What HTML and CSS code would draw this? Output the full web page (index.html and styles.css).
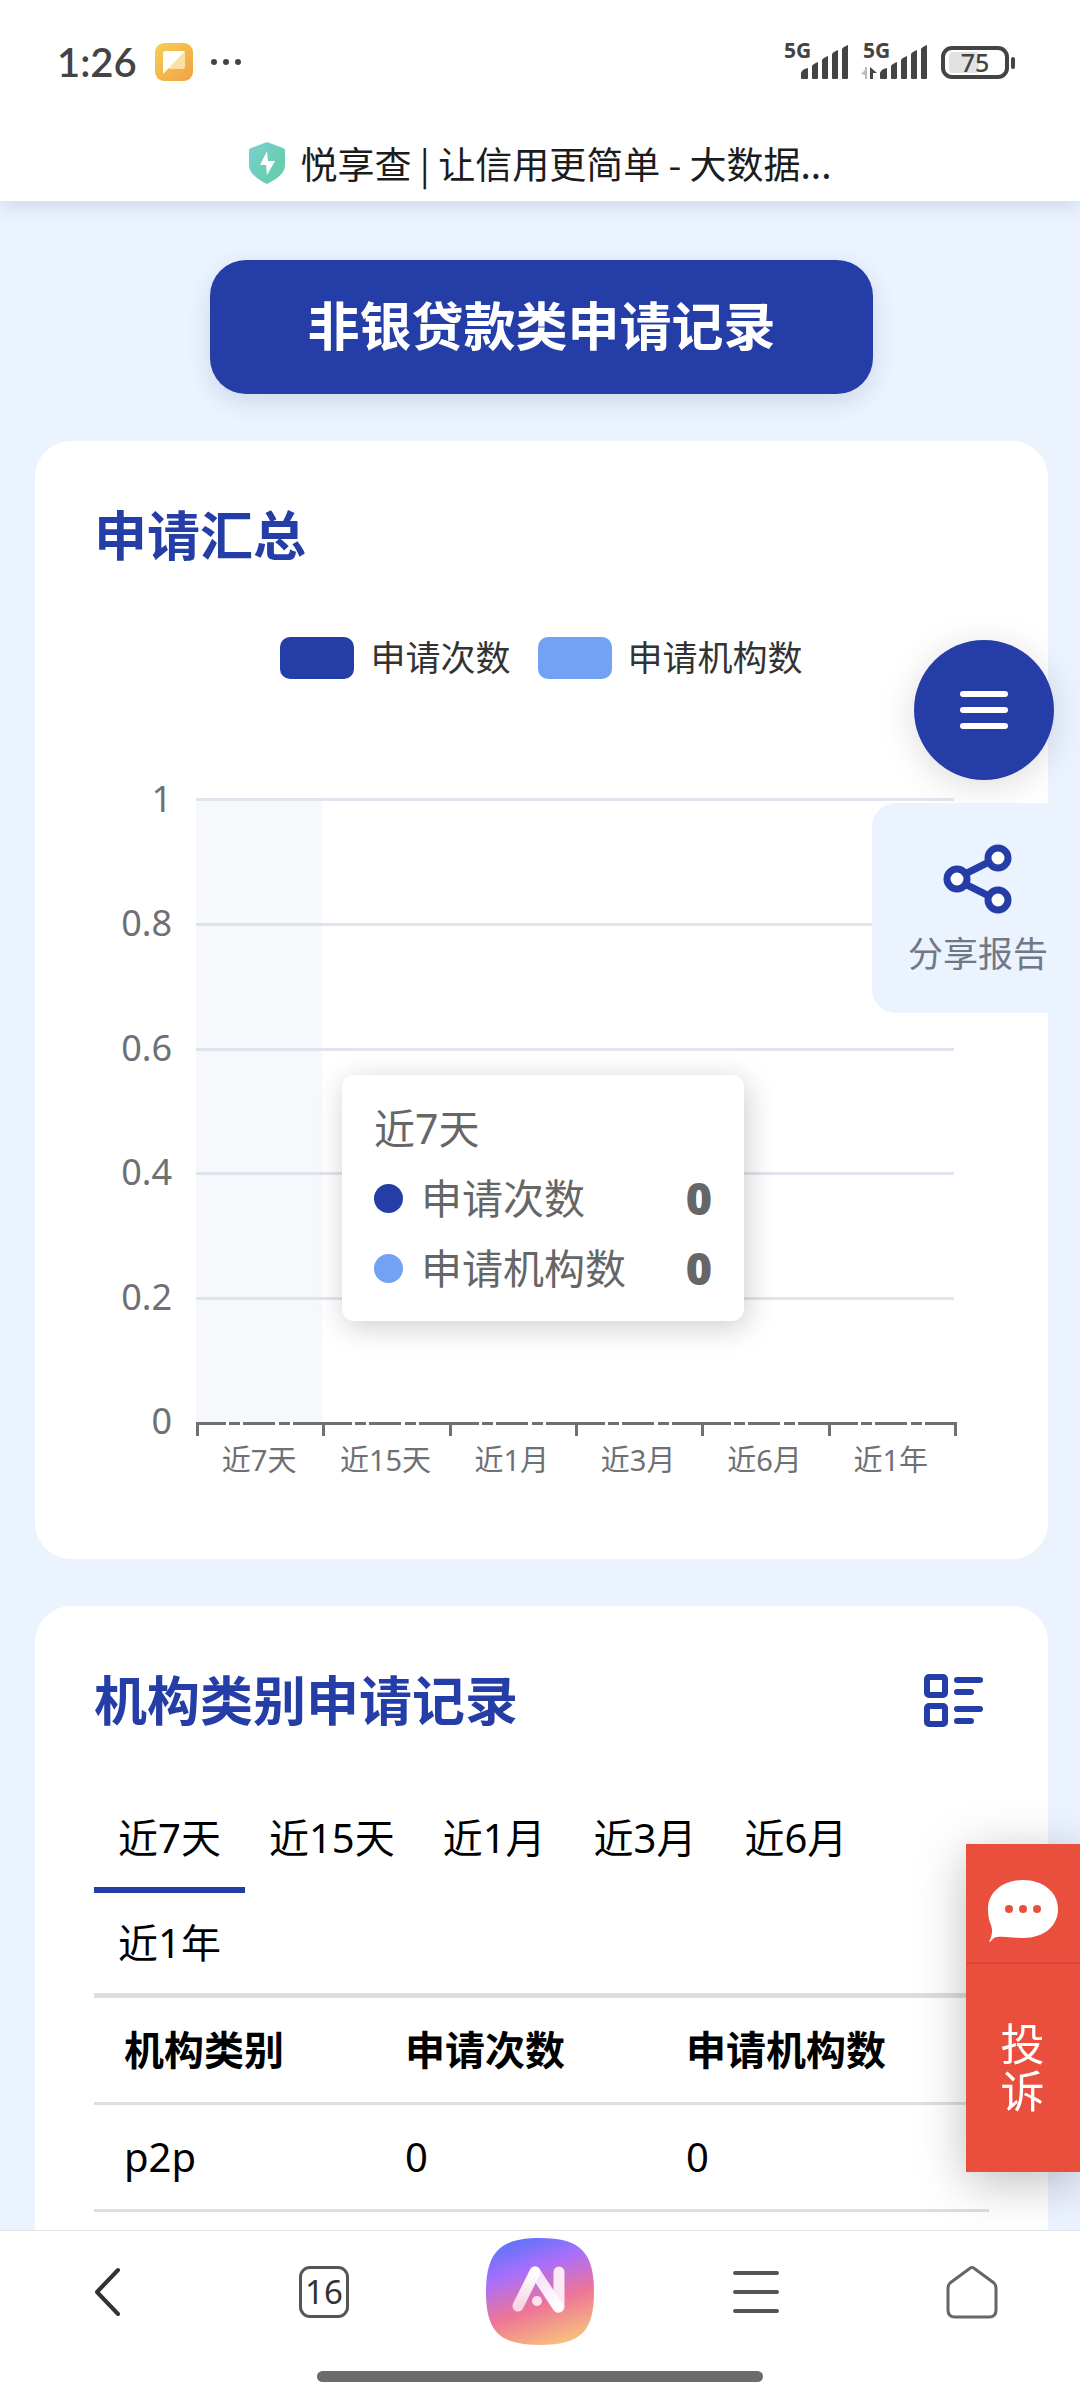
FILE: index.html
```html
<!DOCTYPE html>
<html lang="zh-CN">
<head>
<meta charset="utf-8">
<meta name="viewport" content="width=device-width, initial-scale=1">
<title>悦享查 | 让信用更简单 - 大数据</title>
<link rel="stylesheet" href="styles.css">
</head>
<body>
<header class="topbar">
  <div class="status">
    <span class="clock">1:26</span>
    <svg class="note-icon" width="38" height="38" viewBox="0 0 38 38" aria-hidden="true">
      <defs><linearGradient id="note" x1="0" y1="0" x2="1" y2="1"><stop offset="0" stop-color="#f5cf55"/><stop offset="1" stop-color="#f3a143"/></linearGradient></defs>
      <rect width="38" height="38" rx="9" fill="url(#note)"/>
      <path d="M10 8h18a2 2 0 0 1 2 2v14a2 2 0 0 1-2 2H14z" fill="#fae0a6"/>
      <path d="M10 8h20L8 31V10a2 2 0 0 1 2-2z" fill="#fff"/>
    </svg>
    <svg class="dots-icon" width="30" height="8" viewBox="0 0 30 8" fill="#444" aria-hidden="true"><circle cx="3" cy="4" r="3"/><circle cx="15" cy="4" r="3"/><circle cx="27" cy="4" r="3"/></svg>
    <svg class="signals" width="232" height="64" viewBox="0 -12 232 64" fill="#444" aria-hidden="true">
      <text x="0" y="16" class="net">5G</text>
      <path id="bars" d="M17 36v-5q1-4 7-5v10q0 1-1 1h-5q-1 0-1-1zM28 36v-12q1-2 6-4v16q0 1-1 1h-4q-1 0-1-1zM38 36v-18q1-2 6-4v22q0 1-1 1h-4q-1 0-1-1zM48 36v-24q1-2 6-4v28q0 1-1 1h-4q-1 0-1-1zM58 36v-29q1-2 6-4v33q0 1-1 1h-4q-1 0-1-1z"/>
      <text x="79" y="16" class="net">5G</text>
      <use href="#bars" x="79"/>
      <path d="M83 25v12h-2v-4l-4-1 4-4v-3z" fill="#bbb"/>
      <path d="M86 37V25l7 6h-4v6z"/>
      <rect x="159" y="6" width="64" height="29" rx="9" fill="none" stroke="#444" stroke-width="4"/>
      <rect x="165" y="10" width="30" height="21" rx="4" fill="#e2e2e2"/>
      <rect x="227" y="15" width="4" height="12" rx="2"/>
      <text x="191" y="30" class="level">75</text>
    </svg>
  </div>
  <div class="site">
    <svg width="36" height="42" viewBox="0 0 36 42" aria-hidden="true">
      <defs><linearGradient id="shield" x1="0" y1="0" x2="1" y2="1"><stop offset="0" stop-color="#7ad0d0"/><stop offset="1" stop-color="#62cba4"/></linearGradient></defs>
      <path d="M18 0 34 6q2 1 2 2v15c0 8-8 14-18 19C8 37 0 31 0 23V8q0-1 2-2z" fill="url(#shield)"/>
      <path d="M18 9 11 23h6l1 10 8-14h-7z" fill="#fff"/>
    </svg>
    <span class="site-name">悦享查 | 让信用更简单 - 大数据...</span>
  </div>
</header>

<main class="report">
  <h1 class="banner">非银贷款类申请记录</h1>

  <section class="card">
    <h2 class="card-title">申请汇总</h2>
    <ul class="legend">
      <li><i class="swatch swatch-count"></i>申请次数</li>
      <li><i class="swatch swatch-org"></i>申请机构数</li>
    </ul>
    <div class="chart">
      <ul class="y-axis"><li>1</li><li>0.8</li><li>0.6</li><li>0.4</li><li>0.2</li><li>0</li></ul>
      <div class="plot">
        <div class="lines"><i></i><i></i><i></i><i></i><i></i></div>
        <div class="band"></div>
        <div class="tooltip">
          <p>近7天</p>
          <p><i class="dot swatch-count"></i>申请次数<b>0</b></p>
          <p><i class="dot swatch-org"></i>申请机构数<b>0</b></p>
        </div>
      </div>
      <ul class="x-axis"><li>近7天</li><li>近15天</li><li>近1月</li><li>近3月</li><li>近6月</li><li>近1年</li></ul>
    </div>
  </section>

  <section class="card card-last">
    <div class="card-head">
      <h2 class="card-title">机构类别申请记录</h2>
      <button class="view-toggle" type="button" aria-label="切换视图">
        <svg width="60" height="54" viewBox="0 0 60 54" fill="none" stroke="#253da6" stroke-width="6" stroke-linecap="round" stroke-linejoin="round">
          <rect x="3" y="3" width="18" height="18" rx="2"/><rect x="3" y="32" width="18" height="18" rx="2"/>
          <path d="M33 6h23M33 18h14M33 35h23M33 47h14"/>
        </svg>
      </button>
    </div>
    <div class="tabs" role="tablist">
      <button class="tab active" type="button" role="tab">近7天</button>
      <button class="tab" type="button" role="tab">近15天</button>
      <button class="tab" type="button" role="tab">近1月</button>
      <button class="tab" type="button" role="tab">近3月</button>
      <button class="tab" type="button" role="tab">近6月</button>
      <button class="tab" type="button" role="tab">近1年</button>
    </div>
    <table class="records">
      <thead><tr><th class="narrow">机构类别</th><th class="narrow">申请次数</th><th>申请机构数</th></tr></thead>
      <tbody><tr><td>p2p</td><td>0</td><td>0</td></tr></tbody>
    </table>
  </section>
</main>

<button class="menu-fab" type="button" aria-label="菜单">
  <svg width="50" height="40" viewBox="0 0 50 40" stroke="#fff" stroke-width="6" stroke-linecap="round"><path d="M4 4h42M4 20h42M4 36h42"/></svg>
</button>
<button class="share" type="button">
  <svg width="70" height="70" viewBox="0 0 70 70" fill="none" stroke="#253da6" stroke-width="7">
    <path d="M24 29 46 18M24 41 46 52"/>
    <circle cx="14" cy="35" r="10" fill="#fff"/><circle cx="55" cy="14" r="10" fill="#fff"/><circle cx="55" cy="56" r="10" fill="#fff"/>
  </svg>
  分享报告
</button>
<a class="complaint" href="#complaint">
  <span class="complaint-icon">
    <svg width="72" height="64" viewBox="0 0 72 64" aria-hidden="true">
      <path d="M36 1c20 0 35 12 35 29S57 59 36 59c-10 0-18-2-26-1-3 0-5 3-7 5-1 0-1-1 0-2 2-5 3-10 1-15C2 42 1 36 1 30 1 13 16 1 36 1z" fill="#fff"/>
      <g fill="#ea4f3d"><circle cx="22" cy="30" r="4"/><circle cx="36" cy="30" r="4"/><circle cx="50" cy="30" r="4"/></g>
    </svg>
  </span>
  <span class="complaint-text">投诉</span>
</a>

<nav class="browser-nav">
  <div class="nav-row">
    <button type="button" aria-label="返回"><svg width="26" height="50" viewBox="0 0 26 50" fill="none" stroke="#333" stroke-width="4" stroke-linecap="round" stroke-linejoin="round"><path d="M23 3 2 25l21 22"/></svg></button>
    <button type="button"><span class="tab-count">16</span></button>
    <button type="button" aria-label="AI">
      <svg width="110" height="108" viewBox="0 0 110 108">
        <defs>
          <linearGradient id="ai" x1=".25" y1="0" x2=".6" y2="1"><stop offset="0" stop-color="#5b73fa"/><stop offset=".3" stop-color="#a86ffb"/><stop offset=".65" stop-color="#ee7596"/><stop offset="1" stop-color="#f6bd7e"/></linearGradient>
          <linearGradient id="leg" x1="0" y1="0" x2="0" y2="1"><stop offset="0" stop-color="#fff"/><stop offset="1" stop-color="#f9d5e4"/></linearGradient>
          <linearGradient id="mid" x1="0" y1="0" x2="1" y2="1"><stop offset="0" stop-color="#f3dcf9"/><stop offset="1" stop-color="#fff"/></linearGradient>
        </defs>
        <path d="M55 0C95 0 109 14 109 54S95 107 55 107 1 94 1 54 15 0 55 0z" fill="url(#ai)"/>
        <g fill="none" stroke-linecap="round" stroke-linejoin="round" stroke-width="11">
          <path d="M74 34v35" stroke="#fbe9f3"/>
          <path d="M50 34 73 69" stroke="url(#mid)"/>
          <path d="M33 68 50 34" stroke="url(#leg)"/>
        </g>
        <circle cx="52" cy="63" r="5" fill="#fce3ee"/>
      </svg>
    </button>
    <button type="button" aria-label="菜单"><svg width="48" height="44" viewBox="0 0 48 44" stroke="#555" stroke-width="4" stroke-linecap="round"><path d="M3 3h42M3 22h42M3 41h42"/></svg></button>
    <button type="button" aria-label="主页"><svg width="52" height="54" viewBox="0 0 52 54" fill="none" stroke="#666" stroke-width="3" stroke-linejoin="round"><path d="M23 4q3-3 6 0l19 14q2 2 2 5v22q0 7-7 7H9q-7 0-7-7V23q0-3 2-5z"/></svg></button>
  </div>
  <div class="home-bar"></div>
</nav>
</body>
</html>
```
FILE: styles.css
```css
* { box-sizing: border-box; }
body, h1, h2, ul, p { margin: 0; padding: 0; }
ul { list-style: none; }
i { display: block; }
svg { display: block; flex: none; }

body {
  display: flex;
  flex-direction: column;
  min-height: 100vh;
  background: #ebf3ff;
  color: #000;
  font-family: "Noto Sans", "Noto Sans CJK SC", sans-serif;
}
button {
  padding: 0;
  border: 0;
  background: none;
  color: inherit;
  font-family: inherit;
}

/* Status bar and page title */
.topbar {
  position: relative;
  height: 201px;
  background: #fff;
  box-shadow: 0 4px 20px rgba(40, 60, 90, .16);
}
.status {
  display: flex;
  align-items: center;
  height: 124px;
  padding: 0 64px 0 57px;
}
.clock {
  color: #444;
  font-family: Lato, sans-serif;
  font-size: 40px;
  font-weight: 600;
}
.note-icon { margin-left: 18px; }
.dots-icon { margin-left: 18px; }
.signals { margin-left: auto; }
.net { font: 700 21px "Open Sans", sans-serif; }
.level { font: 500 25px "Noto Sans", sans-serif; text-anchor: middle; }
.site {
  display: flex;
  align-items: center;
  justify-content: center;
  gap: 16px;
  height: 77px;
}
.site-name {
  color: #1c1c1c;
  font-family: "Noto Sans CJK SC", sans-serif;
  font-size: 37px;
  line-height: 48px;
}

/* Report */
.report {
  display: flex;
  flex: 1;
  flex-direction: column;
  padding: 59px 32px 0 35px;
}
.banner {
  align-self: center;
  margin-bottom: 47px;
  padding: 30px 97px 32px;
  border-radius: 36px;
  background: #253da6;
  box-shadow: 0 8px 24px rgba(40, 60, 90, .14);
  color: #fff;
  font-size: 52px;
  font-weight: 700;
  line-height: 72px;
}
.card {
  margin-bottom: 47px;
  padding: 59px 59px 84px;
  border-radius: 36px;
  background: #fff;
}
.card-last {
  flex: 1;
  margin-bottom: 0;
  padding-bottom: 16px;
  border-radius: 36px 36px 0 0;
}
.card-head {
  display: flex;
  align-items: center;
  justify-content: space-between;
}
.card-title {
  color: #253da6;
  font-size: 53px;
  font-weight: 700;
  line-height: 72px;
}
.view-toggle { margin-right: 5px; }

/* Chart */
.legend {
  display: flex;
  justify-content: center;
  gap: 27px;
  margin: 65px 0 119px;
  color: #333;
  font-size: 35px;
  line-height: 42px;
}
.legend li {
  display: flex;
  gap: 16px;
}
.swatch {
  width: 74px;
  height: 42px;
  border-radius: 10px;
}
.swatch-count { background: #253da6; }
.swatch-org { background: #73a2f4; }
.chart {
  display: grid;
  grid-template-columns: 78px 1fr;
  padding: 0 35px 0 24px;
}
.y-axis {
  display: flex;
  flex-direction: column;
  justify-content: space-between;
  margin: -19px 0;
  color: #6e7074;
  font-size: 36px;
  line-height: 40px;
}
.y-axis li {
  width: 54px;
  text-align: right;
}
.plot {
  display: grid;
  grid-template-columns: repeat(6, 1fr);
  position: relative;
  height: 624px;
}
.lines {
  display: flex;
  flex-direction: column;
  grid-area: 1 / 1 / 2 / 7;
}
.lines i {
  flex: 1;
  border-top: 3px solid #e2e5ef;
}
.band {
  grid-area: 1 / 1;
  background: rgba(210, 219, 238, .2);
}
.x-axis {
  display: grid;
  grid-column: 2;
  grid-template-columns: repeat(6, 1fr);
  margin-right: -3px;
  border-right: 3px solid transparent;
  background: linear-gradient(#6e7074, #6e7074) 100% 0 / 3px 14px no-repeat border-box;
  color: #6e7074;
  font-size: 29px;
  line-height: 30px;
  text-align: center;
}
.x-axis li {
  padding-top: 23px;
  background:
    linear-gradient(#6e7074, #6e7074) 0 0 / 3px 14px no-repeat,
    linear-gradient(90deg, #6e7074 30px, #fff 30px 33px, #6e7074 33px 44px, #fff 44px 47px, #6e7074 47px 79px, #fff 79px 83px, #6e7074 83px 94px, #fff 94px 97px, #6e7074 97px) 0 0 / 100% 3px no-repeat;
}
.tooltip {
  position: absolute;
  top: 277px;
  left: 146px;
  width: 402px;
  padding: 18px 32px;
  border-radius: 12px;
  background: #fff;
  box-shadow: 3px 6px 30px rgba(0, 0, 0, .2);
  color: #666;
  font-size: 41px;
  line-height: 70px;
}
.tooltip p {
  display: flex;
  align-items: center;
}
.tooltip b {
  margin-left: auto;
  font-size: 45px;
  font-weight: 900;
}
.dot {
  width: 29px;
  height: 29px;
  margin-right: 18px;
  border-radius: 50%;
}

/* Records */
.tabs {
  display: flex;
  flex-wrap: wrap;
  margin-top: 51px;
  padding-right: 70px;
}
.tab {
  padding: 0 24px;
  border-bottom: 6px solid transparent;
  font-size: 40px;
  line-height: 99px;
}
.tab.active { border-color: #253da6; }
.records {
  width: 100%;
  margin-top: -5px;
  border-top: 5px solid #dcdfe0;
  border-spacing: 0;
  font-size: 40px;
  line-height: 56px;
  text-align: left;
}
.records th, .records td {
  height: 107px;
  padding: 0 30px;
  border-bottom: 3px solid #dcdfe0;
}
.records .narrow { width: 31.4%; }

/* Floating controls */
.menu-fab {
  position: fixed;
  top: 640px;
  right: 26px;
  display: grid;
  place-items: center;
  width: 140px;
  height: 140px;
  border-radius: 50%;
  background: #253da6;
  box-shadow: 0 6px 36px rgba(0, 0, 0, .14);
}
.share {
  position: fixed;
  top: 803px;
  right: 0;
  display: flex;
  flex-direction: column;
  align-items: center;
  gap: 15px;
  padding: 41px 32px 34px 36px;
  border-radius: 24px 0 0 24px;
  background: #ebf3ff;
  color: #717885;
  font-size: 35px;
  line-height: 50px;
}
.complaint {
  position: fixed;
  right: 0;
  bottom: 231px;
  width: 114px;
  background: #ea4f3d;
  box-shadow: 0 10px 50px rgba(0, 0, 0, .26);
  color: #fff;
  text-decoration: none;
}
.complaint-icon {
  display: grid;
  place-items: center;
  height: 120px;
  padding-top: 15px;
  border-bottom: 2px solid #d6483a;
}
.complaint-text {
  display: block;
  width: 45px;
  margin: 0 auto;
  padding: 57px 0;
  font-size: 44px;
  line-height: 47px;
}

/* Browser toolbar */
.browser-nav {
  position: relative;
  height: 173px;
  border-top: 1px solid #e3e4e6;
  background: #fff;
}
.nav-row {
  display: grid;
  grid-template-columns: repeat(5, 1fr);
  height: 122px;
}
.nav-row button {
  display: grid;
  place-items: center;
}
.tab-count {
  width: 50px;
  height: 52px;
  border: 3px solid #555;
  border-radius: 11px;
  color: #333;
  font-size: 33px;
  line-height: 46px;
}
.home-bar {
  width: 446px;
  height: 11px;
  margin: 18px auto 0;
  border-radius: 6px;
  background: #6b6b6b;
}
```
